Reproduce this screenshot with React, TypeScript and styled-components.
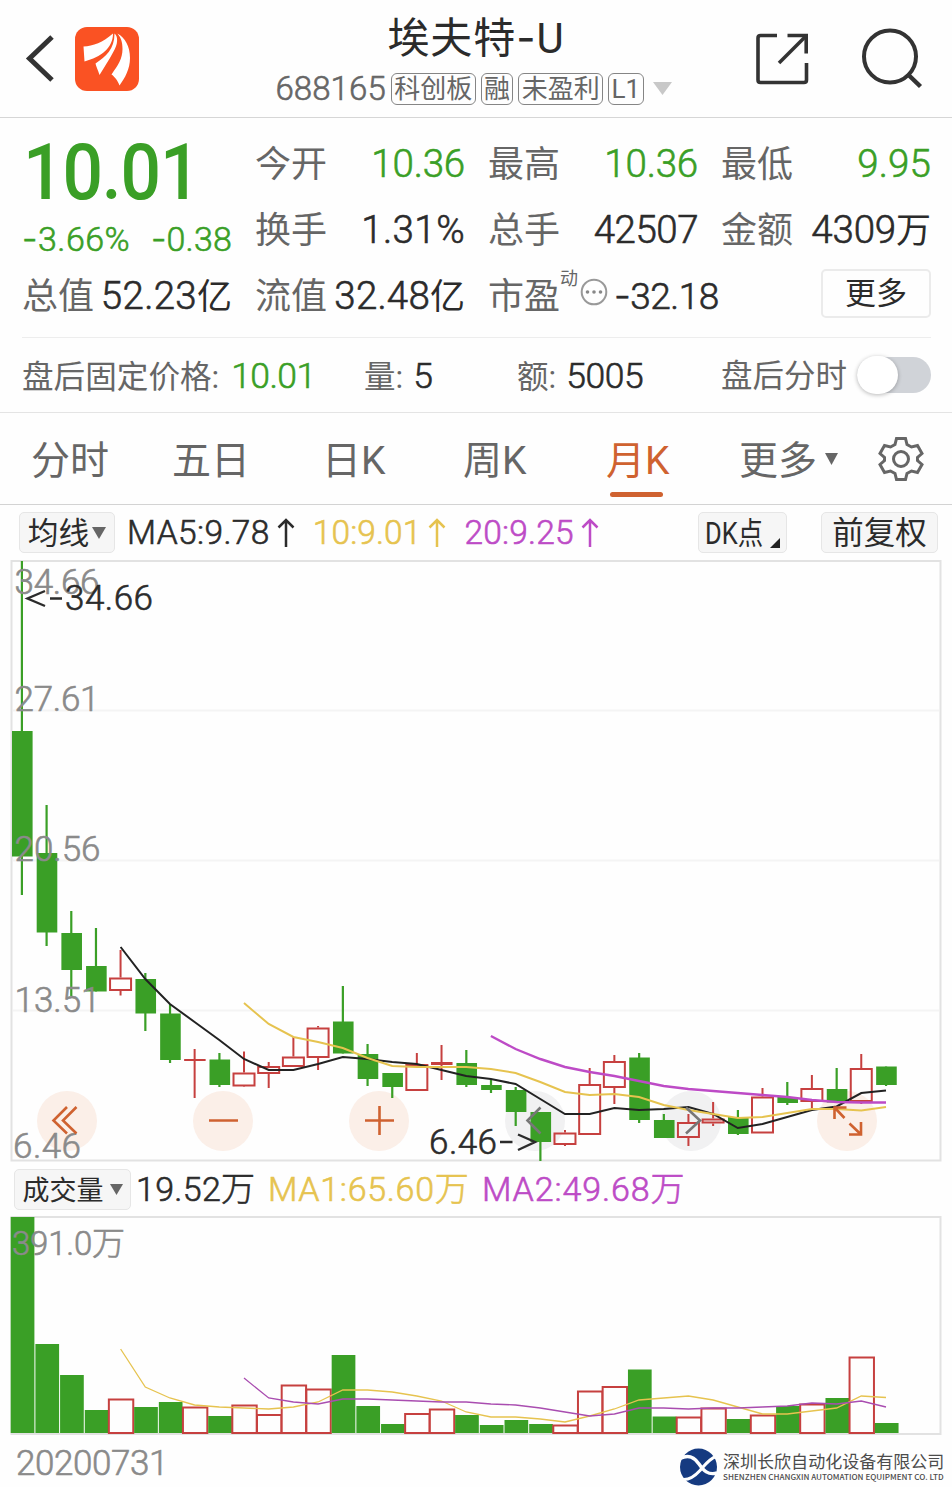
import React from "react";
import styled, { createGlobalStyle, css } from "styled-components";

const GREEN = "#3a9f26";
const RED = "#c6403f";
const ORANGE = "#cf6230";
const GOLD = "#e6c34f";
const PURPLE = "#bd4bc6";
const INK = "#2b2b2b";
const GRAY = "#666666";
const LABEL = "#8a8a8a";

const GlobalStyle = createGlobalStyle`
  * { box-sizing: border-box; }
  body {
    margin: 0;
    background: #fefefe;
    font-family: Roboto, "Noto Sans CJK SC", sans-serif;
    color: ${INK};
  }
`;

const Page = styled.main`
  width: 952px;
  height: 1487px;
  overflow: hidden;
  display: flex;
  flex-direction: column;
`;

// Numerals sit between the light and regular weights of the family.
const numeralWeight = css`
  font-weight: 300;
  -webkit-text-stroke: 0.6px currentColor;
`;

const Text = styled.span<{ $size: number; $ls?: number; $color?: string; $num?: boolean }>`
  font-size: ${(p) => p.$size}px;
  letter-spacing: ${(p) => p.$ls ?? 0}px;
  color: ${(p) => p.$color ?? INK};
  white-space: nowrap;
  ${(p) => p.$num && numeralWeight}
`;

const Dash = styled.span`
  font-family: Inter, sans-serif;
`;

function Figure({ children, size, ls, color }: { children: string; size: number; ls?: number; color?: string }) {
  const negative = children.startsWith("-");
  return (
    <Text $size={size} $ls={ls} $color={color} $num>
      {negative && <Dash>-</Dash>}
      {negative ? children.slice(1) : children}
    </Text>
  );
}

/* ---------- header ---------- */

const Header = styled.header`
  height: 118px;
  flex: none;
  border-bottom: 1px solid #d6d6d6;
  display: grid;
  grid-template-columns: 250px 1fr 250px;
`;

const HeaderSide = styled.div<{ $right?: boolean }>`
  display: flex;
  align-items: center;
  ${(p) =>
    p.$right
      ? css`
          justify-content: flex-end;
          gap: 52px;
          padding: 0 29px 0 0;
        `
      : css`
          gap: 19px;
          padding-left: 24px;
        `}
`;

const TitleBlock = styled.div`
  display: flex;
  flex-direction: column;
  align-items: center;
`;

const Title = styled.h1`
  margin: 8px 0 0;
  font-size: 42px;
  line-height: 59px;
  font-weight: 400;
  letter-spacing: 0.9px;
  white-space: nowrap;
`;

const SubTitle = styled.div`
  display: flex;
  align-items: center;
  gap: 5px;
  height: 41px;
  margin-right: 5px;

  svg {
    margin-left: 4px;
  }
`;

const Tag = styled.span`
  height: 32px;
  padding: 0 2.4px;
  border: 1px solid #858585;
  border-radius: 6px;
  font-size: 26px;
  line-height: 31px;
  color: ${GRAY};
  white-space: nowrap;
`;

/* ---------- quote summary ---------- */

const Quote = styled.section`
  height: 220px;
  flex: none;
  margin: 0 21px 0 22px;
  padding-top: 12px;
  border-bottom: 1px solid #ededed;
  display: grid;
  grid-template-columns: repeat(4, 210px);
  grid-template-rows: repeat(3, 66px);
  column-gap: 23px;
`;

const PriceBlock = styled.div`
  grid-row: 1 / 3;
  display: flex;
  flex-direction: column;
`;

const Price = styled.div`
  height: 84px;
  padding-left: 1px;
  font-size: 78px;
  line-height: 85px;
  font-weight: 500;
  letter-spacing: -1.2px;
  transform: scaleX(0.915);
  transform-origin: left center;
  color: ${GREEN};
`;

const Changes = styled.div`
  display: flex;
  justify-content: space-between;
  height: 50px;
  line-height: 50px;
`;

const Cell = styled.div<{ $wide?: boolean }>`
  display: flex;
  justify-content: ${(p) => (p.$wide ? "flex-start" : "space-between")};
  align-items: baseline;
  line-height: 68px;
`;

const Sup = styled.sup`
  align-self: flex-start;
  font-size: 18px;
  line-height: 18px;
  margin-top: 8px;
  color: ${GRAY};
`;

const InfoIcon = styled.svg`
  align-self: center;
  margin: 0 6px 6px 2px;
  flex: none;
`;

const MoreButton = styled.button`
  justify-self: end;
  width: 110px;
  height: 49px;
  margin-top: 7px;
  padding: 0;
  border: 2px solid #ebebeb;
  border-radius: 5px;
  background: #fefefe;
  font: 400 31px/42px Roboto, "Noto Sans CJK SC", sans-serif;
  color: ${INK};
`;

/* ---------- after-hours ---------- */

const AfterHours = styled.section`
  height: 75px;
  flex: none;
  border-bottom: 1px solid #e4e4e4;
  padding: 0 21px 0 22px;
  display: grid;
  grid-template-columns: 342px 153px 204px 1fr;
  align-items: start;
`;

const Pair = styled.div<{ $gap: number }>`
  display: flex;
  align-items: baseline;
  gap: ${(p) => p.$gap}px;
  line-height: 77px;
`;

const SwitchPair = styled.div`
  display: flex;
  align-items: center;
  justify-content: space-between;
  line-height: 77px;
`;

const Toggle = styled.span`
  width: 74px;
  height: 36px;
  margin-bottom: 3px;
  border-radius: 18px;
  background: #d0d3d8;
  display: flex;
  align-items: center;
`;

const Knob = styled.span`
  width: 41px;
  height: 38px;
  border-radius: 20px;
  background: #fff;
  box-shadow: 0 1px 4px rgba(0, 0, 0, 0.28);
`;

/* ---------- period tabs ---------- */

const Tabs = styled.nav`
  height: 92px;
  flex: none;
  border-bottom: 1px solid #d3d3d3;
  padding-left: 31px;
  display: grid;
  grid-template-columns: 141px 150px 141px 143px 133px 139px 1fr;
`;

const Tab = styled.div<{ $active?: boolean }>`
  position: relative;
  justify-self: start;
  height: 91px;
  font-size: 39px;
  line-height: 86px;
  padding-top: 5px;
  color: ${(p) => (p.$active ? ORANGE : GRAY)};
  white-space: nowrap;
  display: flex;
  align-items: center;
  gap: 8px;

  svg {
    margin-bottom: 5px;
  }

  ${(p) =>
    p.$active &&
    css`
      &::after {
        content: "";
        position: absolute;
        left: 4px;
        bottom: 7px;
        width: 53px;
        height: 5px;
        border-radius: 3px;
        background: ${ORANGE};
      }
    `}
`;

/* ---------- indicator bars ---------- */

const Bar = styled.div<{ $height: number; $left: number }>`
  height: ${(p) => p.$height}px;
  flex: none;
  padding: 0 14px 0 ${(p) => p.$left}px;
  display: flex;
  align-items: center;
`;

const Chip = styled.div<{ $width: number; $size: number }>`
  width: ${(p) => p.$width}px;
  height: 41px;
  border: 1px solid #e6e6e6;
  border-radius: 5px;
  background: #f6f6f6;
  display: flex;
  align-items: center;
  justify-content: center;
  gap: 3px;
  font-size: ${(p) => p.$size}px;
  line-height: 38px;
  white-space: nowrap;
  flex: none;
`;

const ChipLabel = styled.span<{ $after?: number }>`
  padding-top: 3px;
  margin-right: ${(p) => p.$after ?? 0}px;
`;

const Condensed = styled.span`
  width: 58px;
  padding-top: 3px;
  transform: scaleX(0.82);
  transform-origin: left center;
`;

const CornerMark = styled.svg`
  margin: 20px 0 0 4px;
`;

const Readouts = styled.div<{ $gap: number; $left: number; $raise?: number }>`
  flex: 1;
  display: flex;
  align-items: center;
  gap: ${(p) => p.$gap}px;
  margin-left: ${(p) => p.$left}px;
  padding-bottom: ${(p) => p.$raise ?? 0}px;
`;

const Readout = styled.div<{ $color: string }>`
  display: flex;
  align-items: center;
  gap: 7px;
  color: ${(p) => p.$color};
`;

const ChipGroup = styled.div`
  display: flex;
  gap: 34px;
`;

const Chart = styled.svg`
  display: block;
  flex: none;
  overflow: visible;

  text {
    font-weight: 300;
    stroke-width: 0.6px;
  }
`;

/* ---------- footer ---------- */

const Footer = styled.footer`
  flex: 1;
  display: flex;
  justify-content: space-between;
  padding: 0 8px 0 16px;
`;

const DateLabel = styled.div`
  font-size: 35px;
  line-height: 58px;
  letter-spacing: -0.4px;
  color: ${LABEL};
  ${numeralWeight}
`;

const Company = styled.div`
  display: flex;
  gap: 6px;
  padding-top: 13px;
`;

const CompanyText = styled.div`
  width: 221px;
  color: #4c4c4c;
  white-space: nowrap;
`;

const CompanyCn = styled.div`
  font: 400 17.05px/22px "Noto Sans CJK SC", sans-serif;
  margin-top: 2px;
`;

const CompanyEn = styled.div`
  font: 500 8.1px/10px "Noto Sans CJK SC", sans-serif;
`;

/* ---------- icons ---------- */

const Caret = ({ w, h, color = "#666" }: { w: number; h: number; color?: string }) => (
  <svg width={w} height={h} viewBox="0 0 10 10" preserveAspectRatio="none">
    <path d="M0 0H10L5 10Z" fill={color} />
  </svg>
);

const BackIcon = () => (
  <svg width="32" height="52" viewBox="0 0 32 52" fill="none">
    <path d="M28 4 5.500 25.500 28 47" stroke="#333" strokeWidth="5" />
  </svg>
);

const BrandIcon = () => (
  <svg width="64" height="64" viewBox="0 0 64 64">
    <rect width="64" height="64" rx="12" fill="#fa5223" />
    <g fill="#fff">
      <path d="M8.500 19.500C18 19 28 15.500 38 6.500C38 21 26 30 9.500 34.500Z" />
      <path d="M39.500 6.500C43 9 43.500 17 38 25.500C34 33 29 40.500 24.500 48C23 43 21 39.500 20.500 36.500C31 29.500 39.500 22 39.500 6.500Z" />
      <path d="M42.500 6.500C50 11 55 19 55 31C55 42 50 51 44.500 58.500C43 54 39.500 49.500 36.500 47.500C43 38 47.500 32 47.500 22C47.500 15 46 11 42.500 6.500Z" />
    </g>
  </svg>
);

const ShareIcon = () => (
  <svg width="54" height="54" viewBox="0 0 54 54" fill="none" stroke="#333" strokeWidth="3.600">
    <path d="M22 3.500H5.500Q3 3.500 3 6V48Q3 50.500 5.500 50.500H49Q51.500 50.500 51.500 48V31" />
    <path d="M32.500 3.500H51.200V21.500" />
    <path d="M51 4 24 31" />
  </svg>
);

const SearchIcon = () => (
  <svg width="62" height="62" viewBox="0 0 62 62" fill="none" stroke="#333" strokeWidth="4">
    <circle cx="29" cy="28.500" r="26" />
    <path d="M46.500 46 59.500 58.500" strokeWidth="4.500" />
  </svg>
);

const GearIcon = () => (
  <svg width="46" height="46" viewBox="0 0 46 46" fill="none" stroke="#666" strokeWidth="3" strokeLinejoin="miter">
    <path d="M18.500 2.500H27.500L29 8.500L33.500 11L39.500 9.500L44 17.500L39.500 21.500V24.500L44 28.500L39.500 36.500L33.500 35L29 37.500L27.500 43.500H18.500L17 37.500L12.500 35L6.500 36.500L2 28.500L6.500 24.500V21.500L2 17.500L6.500 9.500L12.500 11L17 8.500Z" />
    <circle cx="23" cy="23" r="7.500" />
  </svg>
);

const ArrowUp = () => (
  <svg width="18" height="30" viewBox="0 0 18 30" fill="none" stroke="currentColor" strokeWidth="2.500">
    <path d="M9 2V29M1.500 9.500 9 2 16.500 9.500" />
  </svg>
);

const CompanyLogo = () => (
  <svg width="38" height="39" viewBox="0 0 38 39">
    <circle cx="19.500" cy="19" r="18.500" fill="#153a80" />
    <g fill="none" stroke="#fefefe">
      <path d="M1 10.500C10 6 15.500 9.500 20 16S29 27.500 38 25" strokeWidth="3.400" />
      <path d="M37 8.500C30 11 26 17 21 22.500S11 32 4 31.500" strokeWidth="3" />
    </g>
  </svg>
);

/* ---------- chart data ---------- */

const STEP = 24.69;
const cx = (i: number) => 22.3 + STEP * i;

// [rising, high, body top, body bottom, low]
const candles: [number, number, number, number, number][] = [
  [0, 561, 731, 856.5, 895],
  [0, 805, 853, 932.5, 946],
  [0, 911, 933, 970, 996],
  [0, 928, 966, 991.5, 991.5],
  [1, 950, 977.5, 991, 995.5],
  [0, 973, 979, 1013.5, 1031],
  [0, 1004, 1013.5, 1060, 1063],
  [1, 1049, 1059, 1061, 1098],
  [0, 1053, 1059.5, 1085, 1087],
  [1, 1051.5, 1072.5, 1086.5, 1087],
  [1, 1062, 1066, 1074, 1088],
  [1, 1037, 1056.5, 1067, 1067],
  [1, 1026, 1027.5, 1058, 1070],
  [0, 986, 1021.5, 1053.5, 1053.5],
  [0, 1044, 1054, 1079, 1086],
  [0, 1073, 1073, 1087, 1098],
  [1, 1053, 1064, 1091, 1091],
  [1, 1045, 1062, 1065, 1080],
  [0, 1050, 1063, 1085, 1087],
  [0, 1080, 1085, 1090, 1093],
  [0, 1087, 1090, 1112, 1126],
  [0, 1112, 1112, 1142, 1161],
  [1, 1130, 1132.5, 1145, 1146],
  [1, 1068, 1084, 1135, 1135],
  [1, 1055, 1061, 1088, 1104],
  [0, 1053, 1057.5, 1120, 1123],
  [0, 1114, 1120, 1138, 1138],
  [1, 1114, 1122, 1138, 1146],
  [1, 1102, 1118.5, 1123.5, 1126],
  [0, 1110, 1117, 1134, 1135],
  [1, 1088, 1096.5, 1133.5, 1133.5],
  [0, 1082, 1097, 1103, 1105],
  [1, 1075, 1088, 1102, 1108],
  [0, 1068, 1089, 1102.5, 1102.5],
  [1, 1054, 1068, 1102, 1104],
  [0, 1066.5, 1066.5, 1085, 1086],
];

const volumes = [
  1217, 1344, 1375, 1410, 1399, 1407, 1402, 1407, 1416, 1405, 1414.5, 1385, 1389, 1355, 1406, 1424, 1413.5, 1409, 1415,
  1425, 1420, 1424, 1425, 1391, 1386.5, 1369.5, 1416.5, 1417, 1408, 1419, 1415, 1406, 1404, 1398, 1357, 1423,
];

const ma5 = [
  947, 979, 1004, 1022, 1040, 1059, 1070, 1070, 1064, 1057, 1059, 1062, 1064, 1070, 1076, 1079, 1084, 1099, 1114, 1114,
  1108, 1110, 1109, 1107, 1114, 1128, 1124, 1117, 1110, 1106.5, 1093, 1090.5,
];
const ma10 = [
  1003, 1024, 1037, 1042, 1048, 1058, 1066, 1067, 1067, 1067, 1069, 1073, 1082, 1092, 1095, 1094, 1097, 1105, 1110, 1114,
  1118, 1117, 1113, 1109, 1109, 1110.5, 1107,
];
const ma20 = [
  1036, 1049, 1059, 1067, 1072, 1076, 1081, 1086, 1089, 1091, 1093, 1095, 1097, 1100, 1102, 1102.5, 1102.5,
];
const vol5 = [
  1349, 1387, 1398, 1405, 1407, 1408, 1409, 1407, 1402, 1390, 1390, 1392, 1396, 1401, 1412, 1417, 1417, 1419, 1422, 1416,
  1409, 1400, 1398, 1396, 1400, 1407, 1414, 1414, 1411, 1408, 1396, 1397.5,
];
const vol10 = [
  1378, 1398, 1402, 1404, 1399, 1399, 1400, 1401, 1402, 1402, 1404, 1405, 1408, 1412, 1416, 1414, 1408, 1408, 1409, 1408,
  1408, 1407, 1406, 1403, 1404, 1401, 1407,
];

const points = (ys: number[], start: number) =>
  ys.map((y, k) => `${(cx(start + k) - 0.5).toFixed(1)},${y}`).join(" ");

const axisLabels: [string, number, number, number][] = [
  ["34.66", 14.5, 594, 85],
  ["27.61", 14.5, 711, 85],
  ["20.56", 14.5, 861, 86],
  ["13.51", 14.5, 1012, 86],
  ["6.46", 13, 1158, 68],
];

const KLineChart = () => (
  <Chart width="952" height="602" viewBox="0 560 952 602" fontFamily="Roboto, sans-serif" fontSize="35">
    <rect x="11.500" y="561" width="929" height="599.500" fill="none" stroke="#e2e2e2" strokeWidth="2" />
    {[710.5, 860.5, 1010.5].map((y) => (
      <path key={y} d={`M13 ${y}H939`} stroke="#f4f4f4" strokeWidth="2" />
    ))}
    {[67, 223, 379, 535, 691, 847].map((x, i) => (
      <circle key={x} cx={x} cy="1121" r="30" fill={i === 3 || i === 4 ? "#f1f1f2" : "#fbefe8"} />
    ))}
    {candles.map(([up, high, top, bottom, low], i) => {
      const x = cx(i);
      return up ? (
        <g key={i} stroke={RED} strokeWidth="2" fill="none">
          <path d={`M${x - 0.5} ${high}V${top}M${x - 0.5} ${bottom}V${low}`} />
          {bottom - top > 3 ? (
            <rect x={x - 11} y={top + 1} width="21" height={bottom - top - 2} />
          ) : (
            <>
              <path d={`M${x - 0.5} ${top}V${bottom}`} />
              <rect x={x - 11} y={top} width="21.500" height={bottom - top} fill={RED} stroke="none" />
            </>
          )}
        </g>
      ) : (
        <g key={i} fill={GREEN}>
          <rect x={x - 1.5} y={high} width="2.200" height={low - high} />
          <rect x={x - 10.3} y={top} width="20.600" height={bottom - top} />
        </g>
      );
    })}
    <g fill="none" strokeWidth="2">
      <polyline points={points(ma5, 4)} stroke="#222" />
      <polyline points={points(ma10, 9)} stroke={GOLD} />
      <polyline points={points(ma20, 19)} stroke={PURPLE} strokeWidth="2.400" />
    </g>
    <g fill={LABEL} stroke={LABEL}>
      {axisLabels.map(([t, x, y, w]) => (
        <text key={t} x={x} y={y} textLength={w}>
          {t}
        </text>
      ))}
    </g>
    <g fill={INK} stroke={INK}>
      <text x="65" y="609.500" textLength="88">34.66</text>
      <text x="429" y="1153.500" textLength="68">6.46</text>
    </g>
    <g stroke={INK} strokeWidth="2.400" fill="none">
      <path d="M45 591 27.500 598.500 45 606M50 598.500H62" />
      <path d="M518 1134.500 535 1142 518 1150M500 1142H512.500" />
    </g>
    <g stroke={ORANGE} strokeWidth="2.600" fill="none">
      <path d="M67 1107 53.500 1120.500 67 1133.500M76.500 1107 63 1120.500 76.500 1133.500" />
      <path d="M209 1120.500H238M365 1120.500H394M379.500 1106V1135" />
      <path d="M834.500 1119V1107.500H846.500M835 1108 844.500 1118M849.500 1123.500 861 1134.500M861 1122V1134.500H849" />
    </g>
    <g stroke="#777" strokeWidth="2.600" fill="none">
      <path d="M540.500 1107.500 527.500 1120.500 540.500 1133.500" />
      <path d="M686 1107.500 700 1120.500 686 1133.500" />
    </g>
  </Chart>
);

const VolumeChart = () => (
  <Chart width="952" height="219" viewBox="0 1216 952 219" fontFamily="Roboto, 'Noto Sans CJK SC', sans-serif">
    <rect x="11.500" y="1217" width="929" height="217" fill="none" stroke="#e2e2e2" strokeWidth="2" />
    {volumes.map((top, i) => {
      const left = 10.7 + STEP * i;
      return candles[i][0] ? (
        <rect key={i} x={left - 0.6} y={top + 0.5} width="24.400" height={1432.5 - top} fill="#fefefe" stroke={RED} strokeWidth="2" />
      ) : (
        <rect key={i} x={left} y={top} width="23.700" height={1433 - top} fill={GREEN} />
      );
    })}
    <g fill="none" strokeWidth="1.300">
      <polyline points={points(vol5, 4)} stroke={GOLD} />
      <polyline points={points(vol10, 9)} stroke="#a94db0" />
    </g>
    <text x="12" y="1254.500" fill={LABEL} stroke={LABEL} fontSize="33" textLength="113">
      391.0万
    </text>
  </Chart>
);

export default function App() {
  return (
    <Page>
      <GlobalStyle />
      <Header>
        <HeaderSide>
          <BackIcon />
          <BrandIcon />
        </HeaderSide>
        <TitleBlock>
          <Title>
            埃夫特<Dash>-</Dash>U
          </Title>
          <SubTitle>
            <Text $size={33} $ls={0.1} $color={GRAY} $num>688165</Text>
            <Tag>科创板</Tag>
            <Tag>融</Tag>
            <Tag>未盈利</Tag>
            <Tag>L1</Tag>
            <Caret w={19} h={13} color="#c8c8c8" />
          </SubTitle>
        </TitleBlock>
        <HeaderSide $right>
          <ShareIcon />
          <SearchIcon />
        </HeaderSide>
      </Header>

      <Quote>
        <PriceBlock>
          <Price>10.01</Price>
          <Changes>
            <Figure size={34} color={GREEN} ls={0.5}>-3.66%</Figure>
            <Figure size={34} color={GREEN} ls={0.2}>-0.38</Figure>
          </Changes>
        </PriceBlock>
        <Cell><Text $size={36} $color={GRAY}>今开</Text><Figure size={38.5} color={GREEN} ls={-0.2}>10.36</Figure></Cell>
        <Cell><Text $size={36} $color={GRAY}>最高</Text><Figure size={38.5} color={GREEN} ls={-0.2}>10.36</Figure></Cell>
        <Cell><Text $size={36} $color={GRAY}>最低</Text><Figure size={38.5} color={GREEN} ls={0.1}>9.95</Figure></Cell>
        <Cell><Text $size={36} $color={GRAY}>换手</Text><Figure size={38.5} ls={0.4}>1.31%</Figure></Cell>
        <Cell><Text $size={36} $color={GRAY}>总手</Text><Figure size={38.5} ls={-0.5}>42507</Figure></Cell>
        <Cell>
          <Text $size={36} $color={GRAY}>金额</Text>
          <span><Figure size={38.5} ls={-0.2}>4309</Figure><Text $size={35}>万</Text></span>
        </Cell>
        <Cell>
          <Text $size={36} $color={GRAY}>总值</Text>
          <span><Figure size={38.5} ls={0.3}>52.23</Figure><Text $size={35}>亿</Text></span>
        </Cell>
        <Cell>
          <Text $size={36} $color={GRAY}>流值</Text>
          <span><Figure size={38.5} ls={0.2}>32.48</Figure><Text $size={35}>亿</Text></span>
        </Cell>
        <Cell $wide>
          <Text $size={36} $color={GRAY}>市盈</Text>
          <Sup>动</Sup>
          <InfoIcon width="28" height="28" viewBox="0 0 28 28">
            <circle cx="14" cy="14" r="12.300" fill="none" stroke="#999" strokeWidth="2" />
            <g fill="#888">
              <circle cx="7.500" cy="14" r="1.800" />
              <circle cx="14" cy="14" r="1.800" />
              <circle cx="20.500" cy="14" r="1.800" />
            </g>
          </InfoIcon>
          <Figure size={37} ls={-0.5}>-32.18</Figure>
        </Cell>
        <MoreButton>更多</MoreButton>
      </Quote>

      <AfterHours>
        <Pair $gap={12}>
          <Text $size={31.6} $color={GRAY}>盘后固定价格:</Text>
          <Figure size={35.5} color={GREEN} ls={-0.6}>10.01</Figure>
        </Pair>
        <Pair $gap={10}>
          <Text $size={31.5} $color={GRAY}>量:</Text>
          <Figure size={35.5}>5</Figure>
        </Pair>
        <Pair $gap={10}>
          <Text $size={31.5} $color={GRAY}>额:</Text>
          <Figure size={35.5} ls={-0.4}>5005</Figure>
        </Pair>
        <SwitchPair>
          <Text $size={31.5} $color={GRAY}>盘后分时</Text>
          <Toggle><Knob /></Toggle>
        </SwitchPair>
      </AfterHours>

      <Tabs>
        <Tab>分时</Tab>
        <Tab>五日</Tab>
        <Tab>日K</Tab>
        <Tab>周K</Tab>
        <Tab $active>月K</Tab>
        <Tab>更多<Caret w={13} h={12} /></Tab>
        <Tab><GearIcon /></Tab>
      </Tabs>

      <Bar $height={55} $left={19}>
        <Chip $width={96} $size={30.7}><ChipLabel>均线</ChipLabel><Caret w={14} h={12} /></Chip>
        <Readouts $gap={18} $left={12}>
          <Readout $color={INK}><Text $size={33.5} $color={INK} $ls={0.4} $num>MA5:9.78</Text><ArrowUp /></Readout>
          <Readout $color={GOLD}><Text $size={33.5} $color={GOLD} $ls={0.1} $num>10:9.01</Text><ArrowUp /></Readout>
          <Readout $color={PURPLE}><Text $size={33.5} $color={PURPLE} $ls={0.2} $num>20:9.25</Text><ArrowUp /></Readout>
        </Readouts>
        <ChipGroup>
          <Chip $width={89} $size={31}>
            <Condensed>DK点</Condensed>
            <CornerMark width="10" height="10" viewBox="0 0 10 10">
              <path d="M10 0V10H0Z" fill="#222" />
            </CornerMark>
          </Chip>
          <Chip $width={117} $size={31.5}><ChipLabel>前复权</ChipLabel></Chip>
        </ChipGroup>
      </Bar>

      <KLineChart />

      <Bar $height={54} $left={14}>
        <Chip $width={117} $size={27}><ChipLabel $after={3}>成交量</ChipLabel><Caret w={13} h={11} /></Chip>
        <Readouts $gap={12.5} $left={5} $raise={5}>
          <Text $size={34} $ls={0.3} $num>19.52万</Text>
          <Text $size={34} $ls={0.7} $color={GOLD} $num>MA1:65.60万</Text>
          <Text $size={34} $ls={0.9} $color={PURPLE} $num>MA2:49.68万</Text>
        </Readouts>
      </Bar>

      <VolumeChart />

      <Footer>
        <DateLabel>20200731</DateLabel>
        <Company>
          <CompanyLogo />
          <CompanyText>
            <CompanyCn>深圳长欣自动化设备有限公司</CompanyCn>
            <CompanyEn>SHENZHEN CHANGXIN AUTOMATION EQUIPMENT CO. LTD</CompanyEn>
          </CompanyText>
        </Company>
      </Footer>
    </Page>
  );
}
